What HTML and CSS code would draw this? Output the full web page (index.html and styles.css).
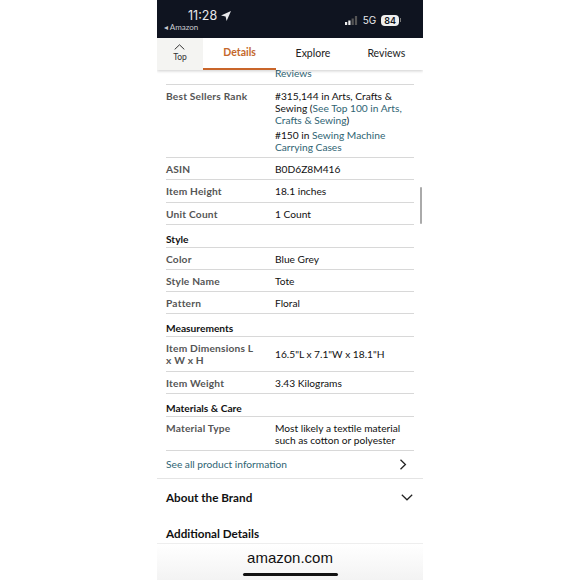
FILE: index.html
```html
<!DOCTYPE html>
<html lang="en">
<head>
    <meta charset="UTF-8">
    <title>Amazon product details</title>
    <link rel="stylesheet" href="styles.css">
</head>
<body>
    <div class="phone">
        <div class="status">
            <div class="status-left">
                <div class="clock">11:28
                    <svg class="loc" width="10" height="10" viewBox="0 0 10 10"><path d="M10 0 0 4.4 4.6 5.4 5.6 10z" fill="#e8e8ea"/></svg>
                </div>
                <div class="back">&#9666; Amazon</div>
            </div>
            <div class="status-right">
                <svg width="13" height="9" viewBox="0 0 13 9"><rect x="0" y="6" width="2.2" height="3" fill="#eee"/><rect x="3.3" y="4.5" width="2.2" height="4.5" fill="#eee"/><rect x="6.6" y="2.5" width="2.2" height="6.5" fill="#555"/><rect x="9.9" y="0" width="2.2" height="9" fill="#555"/></svg>
                <span class="net">5G</span>
                <span class="batt">84</span>
            </div>
        </div>

        <div class="tabs">
            <div class="tab-top">
                <svg width="11" height="6" viewBox="0 0 11 6"><path d="M.7 5.4 5.5.8l4.8 4.6" fill="none" stroke="#333" stroke-width="1"/></svg>
                <span>Top</span>
            </div>
            <div class="tab active">Details</div>
            <div class="tab">Explore</div>
            <div class="tab">Reviews</div>
        </div>

        <div class="content">
            <div class="scrollbar"></div>
            <div class="table">
                <div class="cut"><a>Reviews</a></div>
                <div class="row rank">
                    <div class="key">Best Sellers Rank</div>
                    <div class="val">
                        <p>#315,144 in Arts, Crafts &amp; Sewing (<a>See Top 100 in Arts, Crafts &amp; Sewing</a>)</p>
                        <p>#150 in <a>Sewing Machine Carrying Cases</a></p>
                    </div>
                </div>
                <div class="row"><div class="key">ASIN</div><div class="val">B0D6Z8M416</div></div>
                <div class="row"><div class="key">Item Height</div><div class="val">18.1 inches</div></div>
                <div class="row"><div class="key">Unit Count</div><div class="val">1 Count</div></div>
                <div class="group">Style</div>
                <div class="row"><div class="key">Color</div><div class="val">Blue Grey</div></div>
                <div class="row"><div class="key">Style Name</div><div class="val">Tote</div></div>
                <div class="row"><div class="key">Pattern</div><div class="val">Floral</div></div>
                <div class="group">Measurements</div>
                <div class="row dims"><div class="key">Item Dimensions L x W x H</div><div class="val">16.5"L x 7.1"W x 18.1"H</div></div>
                <div class="row"><div class="key">Item Weight</div><div class="val">3.43 Kilograms</div></div>
                <div class="group">Materials &amp; Care</div>
                <div class="row material"><div class="key">Material Type</div><div class="val">Most likely a textile material such as cotton or polyester</div></div>
            </div>
            <div class="see-all">
                <a>See all product information</a>
                <svg width="8" height="11" viewBox="0 0 8 11"><path d="M1.5.8 6.4 5.5 1.5 10.2" fill="none" stroke="#222" stroke-width="1.3"/></svg>
            </div>
            <div class="section brand">
                <span>About the Brand</span>
                <svg width="12" height="7" viewBox="0 0 12 7"><path d="M.8.8 6 5.8 11.2.8" fill="none" stroke="#222" stroke-width="1.2"/></svg>
            </div>
            <div class="section extra"><span>Additional Details</span></div>
        </div>

        <div class="address">
            <span>amazon.com</span>
            <div class="home-bar"></div>
        </div>
    </div>
</body>
</html>
```

FILE: styles.css
```css
* {
    margin: 0;
    padding: 0;
    box-sizing: border-box;
}

body {
    background: #fff;
    display: flex;
    justify-content: center;
    font-family: 'Lato', sans-serif;
    color: #111;
    height: 580px;
    overflow: hidden;
}

a {
    color: #2f6473;
}

.phone {
    width: 266px;
    height: 580px;
    display: flex;
    flex-direction: column;
    overflow: hidden;
}

/* status bar */
.status {
    height: 38px;
    flex: none;
    background: #0f1420;
    color: #e8e8ea;
    display: flex;
    justify-content: space-between;
    padding: 8px 24px 0 7px;
}

.clock {
    font-family: 'Inter', sans-serif;
    font-size: 12.5px;
    line-height: 15px;
    padding-left: 24px;
}

.loc {
    vertical-align: -1px;
}

.back {
    font-size: 8px;
    line-height: 10px;
    margin-top: -1px;
    color: #c9cbd0;
}

.status-right {
    display: flex;
    align-items: center;
    gap: 5px;
    height: 14px;
    margin-top: 5px;
}

.net {
    font-family: 'Inter', sans-serif;
    font-size: 10px;
}

.batt {
    background: #eee;
    color: #0f1420;
    font-family: 'Inter', sans-serif;
    font-size: 9px;
    font-weight: 600;
    line-height: 11px;
    padding: 0 3px;
    border-radius: 4px;
    position: relative;
}

.batt:after {
    content: '';
    position: absolute;
    right: -2px;
    top: 3.5px;
    width: 1px;
    height: 4px;
    background: #777;
}

/* tabs */
.tabs {
    height: 32px;
    flex: none;
    display: flex;
    box-shadow: 0 1px 3px rgba(0, 0, 0, 0.2);
    position: relative;
    z-index: 2;
    background: #fff;
}

.tab-top {
    width: 46px;
    background: #f4f4f2;
    display: flex;
    flex-direction: column;
    align-items: center;
    padding-top: 6px;
    font-size: 8.5px;
    line-height: 10px;
    gap: 2px;
    color: #333;
}

.tab {
    width: 73.5px;
    text-align: center;
    font-size: 10.5px;
    line-height: 31px;
    color: #222;
}

.tab.active {
    color: #c4672b;
    font-weight: 700;
    border-bottom: 2.5px solid #c9652a;
    line-height: 29px;
}

/* product details */
.content {
    flex: 1;
    position: relative;
    overflow: hidden;
    font-size: 10.2px;
    line-height: 12.2px;
}

.scrollbar {
    position: absolute;
    top: 117px;
    right: 1px;
    width: 2px;
    height: 37px;
    background: #aaa;
    border-radius: 1px;
}

.table {
    padding: 0 9px;
}

.cut {
    height: 15px;
    padding: 0 0 0 109px;
    line-height: 7px;
    border-bottom: 1px solid #d8d8d8;
}

.row {
    display: flex;
    align-items: flex-start;
    padding: 5px 0 0;
    height: 22.2px;
    border-bottom: 1px solid #d8d8d8;
}

.key {
    width: 109px;
    flex: none;
    padding-right: 14px;
    font-weight: 700;
    letter-spacing: 0.2px;
    color: #555;
}

.val {
    flex: 1;
}

.val p + p {
    margin-top: 2.5px;
}

.rank {
    height: 73.2px;
}

.dims {
    height: 34.5px;
    align-items: center;
    padding: 0;
}

.material {
    height: 34px;
}

.group {
    height: 23px;
    padding-top: 8px;
    font-weight: 700;
    border-bottom: 1px solid #d8d8d8;
}

.see-all {
    height: 28px;
    padding: 0 16px 0 9px;
    display: flex;
    align-items: center;
    justify-content: space-between;
    border-bottom: 1px solid #e4e4e4;
}

.section {
    font-size: 11.7px;
    font-weight: 700;
    padding: 0 9px;
    display: flex;
    justify-content: space-between;
    align-items: center;
}

.brand {
    height: 36px;
    padding-right: 10px;
}

.extra {
    height: 36px;
}

/* address bar */
.address {
    height: 37px;
    flex: none;
    background: linear-gradient(#fff, #f3f3f3);
    border-top: 1px solid #eee;
    position: relative;
    text-align: center;
    font-family: 'Liberation Sans', sans-serif;
    font-size: 15px;
    line-height: 28px;
    color: #111;
}

.home-bar {
    position: absolute;
    left: 86px;
    bottom: 4px;
    width: 95px;
    height: 3px;
    border-radius: 2px;
    background: #111;
}
```
